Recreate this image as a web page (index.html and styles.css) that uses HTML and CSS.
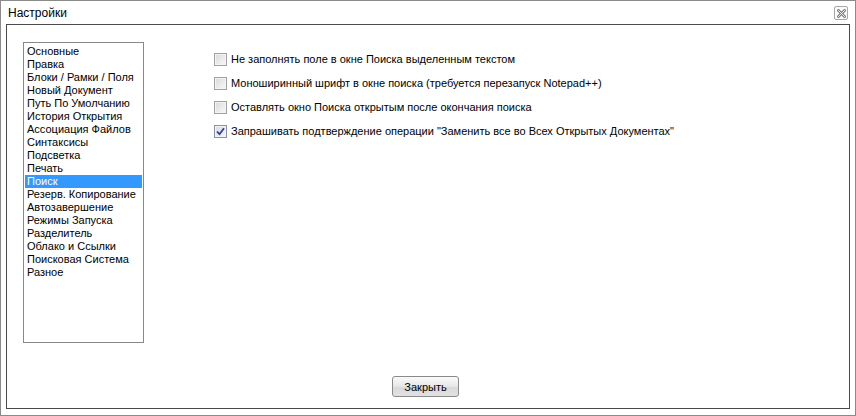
FILE: index.html
```html
<!DOCTYPE html>
<html lang="ru">
<head>
<meta charset="utf-8">
<title>Настройки</title>
<link rel="stylesheet" href="styles.css">
</head>
<body>
<div class="window">
  <div class="titlebar">
    <span class="title">Настройки</span>
    <span class="close">
      <svg width="9" height="9" viewBox="0 0 9 9">
        <path d="M1.5 1.5 L7.5 7.5 M7.5 1.5 L1.5 7.5" stroke="#808080" stroke-width="2.8" stroke-linecap="square"/>
        <path d="M1.5 1.5 L7.5 7.5 M7.5 1.5 L1.5 7.5" stroke="#ececec" stroke-width="1" stroke-linecap="square"/>
      </svg>
    </span>
  </div>
  <div class="panel">
    <div class="content">
      <ul class="list">
        <li>Основные</li>
        <li>Правка</li>
        <li>Блоки / Рамки / Поля</li>
        <li>Новый Документ</li>
        <li>Путь По Умолчанию</li>
        <li>История Открытия</li>
        <li>Ассоциация Файлов</li>
        <li>Синтаксисы</li>
        <li>Подсветка</li>
        <li>Печать</li>
        <li class="selected">Поиск</li>
        <li>Резерв. Копирование</li>
        <li>Автозавершение</li>
        <li>Режимы Запуска</li>
        <li>Разделитель</li>
        <li>Облако и Ссылки</li>
        <li>Поисковая Система</li>
        <li>Разное</li>
      </ul>
      <div class="options">
        <label class="option"><span class="box"></span>Не заполнять поле в окне Поиска выделенным текстом</label>
        <label class="option"><span class="box"></span>Моноширинный шрифт в окне поиска (требуется перезапуск Notepad++)</label>
        <label class="option"><span class="box"></span>Оставлять окно Поиска открытым после окончания поиска</label>
        <label class="option"><span class="box checked"><svg width="9" height="9" viewBox="0 0 9 9"><path d="M1 4.5 L3.5 7.2 L8 1.2" fill="none" stroke="#2a3fa8" stroke-width="1.8"/></svg></span>Запрашивать подтверждение операции "Заменить все во Всех Открытых Документах"</label>
      </div>
    </div>
    <div class="footer">
      <button class="btn">Закрыть</button>
    </div>
  </div>
</div>
</body>
</html>
```
FILE: styles.css
```css
* { box-sizing: border-box; }
html, body { margin: 0; padding: 0; background: #fff; }
body {
  font-family: "Liberation Sans", Arial, sans-serif;
  font-size: 11px;
  color: #000;
}
.window {
  width: 856px;
  height: 416px;
  border: 1px solid #8a8a8a;
  background: #fff;
  display: flex;
  flex-direction: column;
}
.titlebar {
  height: 23px;
  display: flex;
  align-items: center;
  justify-content: space-between;
  padding: 0 7px 0 7px;
}
.title {
  font-size: 12px;
  margin-top: 1px;
}
.close {
  width: 14px;
  height: 14px;
  border: 1px solid #a8a8a8;
  border-radius: 2px;
  display: flex;
  align-items: center;
  justify-content: center;
  margin-top: 1px;
  background: #fafafa;
}
.panel {
  margin: 0 5px 6px 5px;
  flex: 1;
  border: 1px solid #4a4a4a;
  display: flex;
  flex-direction: column;
}
.content {
  display: flex;
  padding: 17px 0 0 16px;
}
.list {
  list-style: none;
  margin: 0;
  padding: 2px 1px;
  width: 121px;
  height: 301px;
  border: 1px solid #888;
}
.list li {
  height: 13px;
  line-height: 13px;
  padding-left: 2px;
  white-space: nowrap;
}
.list li.selected {
  background: #3399ff;
  color: #fff;
}
.options {
  display: flex;
  flex-direction: column;
  gap: 11px;
  padding: 11px 0 0 70px;
}
.option {
  display: flex;
  align-items: center;
  height: 13px;
  line-height: 13px;
  white-space: nowrap;
}
.box {
  width: 13px;
  height: 13px;
  border: 1px solid #a0a0a0;
  background: linear-gradient(135deg, #d8d8d8 0%, #ececec 60%, #f6f6f6 100%);
  box-shadow: inset 0 0 0 1px #f4f4f4;
  margin-right: 4px;
  display: flex;
  align-items: center;
  justify-content: center;
  flex: none;
}
.box.checked {
  border-color: #8a8fb0;
}
.footer {
  display: flex;
  justify-content: center;
  padding: 33px 5px 0 0;
}
.btn {
  font-family: "Liberation Sans", Arial, sans-serif;
  font-size: 11px;
  width: 67px;
  height: 21px;
  border: 1px solid #8a8a8a;
  border-radius: 3px;
  background: linear-gradient(#fafafa, #e6e6e6 50%, #d8d8d8 51%, #e2e2e2);
  color: #000;
  padding: 0;
}
```
